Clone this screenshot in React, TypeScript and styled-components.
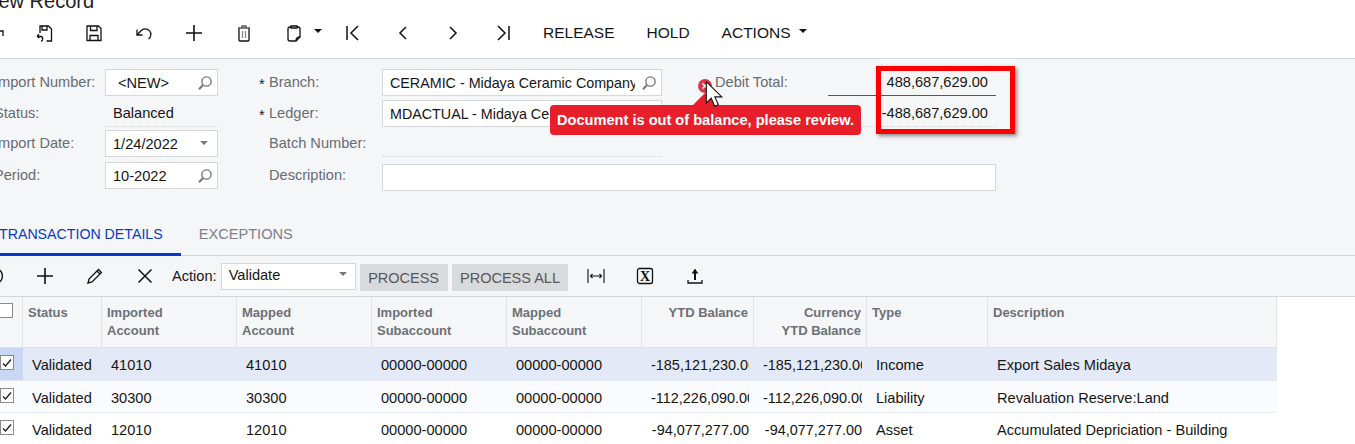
import * as React from "react";
import styled, { createGlobalStyle } from "styled-components";

const GlobalStyle = createGlobalStyle`
  html, body {
    margin: 0;
    background: #fff;
    overflow: hidden;
  }
  * {
    box-sizing: border-box;
  }
`;

const rows = [
  ["41010", "00000-00000", "-185,121,230.00", "Income", "Export Sales Midaya"],
  ["30300", "00000-00000", "-112,226,090.00", "Liability", "Revaluation Reserve:Land"],
  ["12010", "00000-00000", "-94,077,277.00", "Asset", "Accumulated Depriciation - Building"],
];

function Icon({ children, size = 20 }: { children: React.ReactNode; size?: number }) {
  return (
    <svg width={size} height={size} viewBox="0 0 20 20" fill="none" stroke="#111" strokeWidth="1.3">
      {children}
    </svg>
  );
}

function SearchIcon() {
  return (
    <svg width="16" height="16" viewBox="0 0 16 16" fill="none" stroke="#777" strokeWidth="1.4">
      <circle cx="9.5" cy="6.5" r="4.6" />
      <path d="M6 10 L2 14.2" strokeWidth="2" />
    </svg>
  );
}

function ToolbarIcons() {
  return (
    <>
      <IconButton>
        <Icon>
          <path d="M13 8h6v5" />
        </Icon>
      </IconButton>
      <IconButton>
        <Icon>
          <path d="M6 10V3h8.5l3 3v12h-5" />
          <path d="M8 3v4h5V3" />
          <path d="M3 13.5l2-2.2M3 13.5l2.4 1.4M3 13.5h4c2 0 2.3 4.5 0 4.5" />
        </Icon>
      </IconButton>
      <IconButton>
        <Icon>
          <path d="M3 3h11.5l2.5 2.5V17.500H3z" />
          <path d="M6.500 3v4.500h6.500V3" />
          <path d="M6 17.500v-5h8v5" />
        </Icon>
      </IconButton>
      <IconButton>
        <Icon>
          <path d="M3 6.500v5.500h5.500" />
          <path d="M3 12l4-4.200a5.600 5.600 0 1 1 7.500 8.200" />
        </Icon>
      </IconButton>
      <IconButton>
        <Icon>
          <path d="M10 2v16M2 10h16" strokeWidth="1.6" />
        </Icon>
      </IconButton>
      <IconButton>
        <Icon>
          <path d="M4 5h12M8 5V3h4v2" stroke="#555" />
          <path d="M5 5.500V17a1 1 0 0 0 1 1h8a1 1 0 0 0 1-1V5.500" />
          <path d="M8.500 8v7M11.500 8v7" stroke="#888" />
        </Icon>
      </IconButton>
      <ClipboardButton>
        <Icon>
          <path d="M7 4H6a2 2 0 0 0-2 2v10a2 2 0 0 0 2 2h6l4-4V6a2 2 0 0 0-2-2h-1" />
          <path d="M7 5V3h6v2z" />
          <path d="M12 18c0-3 1-4 4-4" />
        </Icon>
        <Caret />
      </ClipboardButton>
      <IconButton>
        <Icon>
          <path d="M4 3v14M15 3l-7 7 7 7" strokeWidth="1.5" />
        </Icon>
      </IconButton>
      <IconButton>
        <Icon>
          <path d="M13 4l-6 6 6 6" strokeWidth="1.5" />
        </Icon>
      </IconButton>
      <IconButton>
        <Icon>
          <path d="M7 4l6 6-6 6" strokeWidth="1.5" />
        </Icon>
      </IconButton>
      <IconButton>
        <Icon>
          <path d="M16 3v14M5 3l7 7-7 7" strokeWidth="1.5" />
        </Icon>
      </IconButton>
    </>
  );
}

export default function App() {
  return (
    <Viewport>
      <GlobalStyle />
      <Canvas>
        <Title>New Record</Title>
        <Toolbar>
          <ToolbarIcons />
          <TextActions>
            <TextButton>RELEASE</TextButton>
            <TextButton>HOLD</TextButton>
            <TextButton>
              ACTIONS
              <Caret />
            </TextButton>
          </TextActions>
        </Toolbar>

        <Form>
          <FirstColumn>
            <FieldLabel>Import Number:</FieldLabel>
            <Box>
              <NewValue>&lt;NEW&gt;</NewValue>
              <SearchIcon />
            </Box>
            <FieldLabel>Status:</FieldLabel>
            <ReadOnly>Balanced</ReadOnly>
            <FieldLabel>Import Date:</FieldLabel>
            <Box>
              <Value>1/24/2022</Value>
              <GrayCaret />
            </Box>
            <FieldLabel>Period:</FieldLabel>
            <Box>
              <Value>10-2022</Value>
              <SearchIcon />
            </Box>
          </FirstColumn>

          <SecondColumn>
            <RequiredLabel>Branch:</RequiredLabel>
            <Box>
              <LongValue>CERAMIC - Midaya Ceramic Company</LongValue>
              <SearchIcon />
            </Box>
            <RequiredLabel>Ledger:</RequiredLabel>
            <Box>
              <LongValue>MDACTUAL - Midaya Ceramic Company</LongValue>
              <SearchIcon />
            </Box>
            <PlainLabel>Batch Number:</PlainLabel>
            <ReadOnly />
            <DescriptionLabel>Description:</DescriptionLabel>
            <WideBox />
          </SecondColumn>

          <ThirdColumn>
            <TotalLabel>
              <ErrorDot>
                <svg width="14" height="14" viewBox="0 0 14 14">
                  <circle cx="7" cy="7" r="7" fill="#d8384c" />
                  <path d="M4.500 4.500l5 5M9.500 4.500l-5 5" stroke="#fff" strokeWidth="1.500" />
                </svg>
              </ErrorDot>
              Debit Total:
            </TotalLabel>
            <TotalValue $error>488,687,629.00</TotalValue>
            <span />
            <TotalValue>-488,687,629.00</TotalValue>
          </ThirdColumn>
        </Form>

        <Tabs>
          <Tab $active>TRANSACTION DETAILS</Tab>
          <Tab>EXCEPTIONS</Tab>
        </Tabs>

        <GridBar>
          <IconButton>
            <Icon>
              <path d="M14 3.500c4.500 3 4.500 10 0 13" />
            </Icon>
          </IconButton>
          <IconButton>
            <Icon>
              <path d="M10 2v16M2 10h16" strokeWidth="1.6" />
            </Icon>
          </IconButton>
          <IconButton>
            <Icon>
              <path d="M3 17l1-4L13.500 3.500l3 3L7 16z" />
              <path d="M12 5l3 3" />
            </Icon>
          </IconButton>
          <IconButton>
            <Icon>
              <path d="M3.500 3.500l13 13M16.500 3.500l-13 13" strokeWidth="1.500" />
            </Icon>
          </IconButton>
          <ActionLabel>Action:</ActionLabel>
          <ActionSelect>
            Validate
            <GrayCaret />
          </ActionSelect>
          <GrayButton>PROCESS</GrayButton>
          <GrayButton>PROCESS ALL</GrayButton>
          <FitButton>
            <Icon>
              <path d="M2 3v14M18 3v14" stroke="#333" />
              <path d="M4.500 10h11M6.500 8l-2 2 2 2M13.500 8l2 2-2 2" strokeWidth="1.100" />
            </Icon>
          </FitButton>
          <IconButton>
            <Icon>
              <rect x="2.500" y="2.500" width="15" height="15" rx="2" />
              <text x="10" y="15" textAnchor="middle" fontFamily="'Liberation Serif', serif" fontWeight="700" fontSize="14" fill="#111" stroke="none">
                X
              </text>
            </Icon>
          </IconButton>
          <IconButton>
            <Icon>
              <path d="M10 14V3.500" strokeWidth="2" />
              <path d="M6.500 7.500L10 3l3.500 4.500z" fill="#111" stroke="none" />
              <path d="M3 14v3h14v-3" />
            </Icon>
          </IconButton>
        </GridBar>

        <Table>
          <HeaderRow>
            <HeaderCheckCell>
              <CheckBox />
            </HeaderCheckCell>
            <HeaderCell>Status</HeaderCell>
            <HeaderCell>Imported<br />Account</HeaderCell>
            <HeaderCell>Mapped<br />Account</HeaderCell>
            <HeaderCell>Imported<br />Subaccount</HeaderCell>
            <HeaderCell>Mapped<br />Subaccount</HeaderCell>
            <HeaderCell $right>YTD Balance</HeaderCell>
            <HeaderCell $right>Currency<br />YTD Balance</HeaderCell>
            <HeaderCell>Type</HeaderCell>
            <HeaderCell>Description</HeaderCell>
          </HeaderRow>
          {rows.map(([account, sub, balance, type, description], index) => (
            <BodyRow key={account} $index={index}>
              <CheckCell $active={index === 0}>
                <CheckBox>
                  <svg width="10" height="10" viewBox="0 0 10 10" fill="none" stroke="#222" strokeWidth="1.400">
                    <path d="M1 5.500l2.500 2.500L9 1.500" />
                  </svg>
                </CheckBox>
              </CheckCell>
              <Cell>Validated</Cell>
              <Cell>{account}</Cell>
              <Cell>{account}</Cell>
              <Cell>{sub}</Cell>
              <Cell>{sub}</Cell>
              <AmountCell><Clip>{balance}</Clip></AmountCell>
              <AmountCell><Clip>{balance}</Clip></AmountCell>
              <Cell>{type}</Cell>
              <Cell>{description}</Cell>
            </BodyRow>
          ))}
        </Table>
      </Canvas>

      <Tooltip>Document is out of balance, please review.</Tooltip>
      <Highlight />
      <Cursor width="19" height="26" viewBox="0 0 13 19">
        <path d="M.5.500V16l3.600-3.400 2.500 5.900 2.700-1.100-2.500-5.800h5z" fill="#fff" stroke="#111" strokeWidth=".8" />
      </Cursor>
    </Viewport>
  );
}

const Viewport = styled.div`
  position: relative;
  width: 1355px;
  height: 444px;
  overflow: hidden;
  font-family: "Liberation Sans", Arial, sans-serif;
  font-size: 14.6px;
  color: #151515;
`;

/* the screenshot is scrolled: the page starts left of and above the window */
const Canvas = styled.div`
  width: 1395px;
  margin: -10px 0 0 -40px;
`;

const Title = styled.div`
  height: 24px;
  font-size: 20px;
  line-height: 23px;
  padding-left: 24px;
  white-space: nowrap;
  color: #222;
`;

const Toolbar = styled.div`
  display: flex;
  align-items: center;
  height: 45px;
  padding: 0 0 7px 9px;
  border-bottom: 1px solid #d6d7d9;
`;

const IconButton = styled.div`
  flex: none;
  display: flex;
  align-items: center;
  justify-content: center;
  width: 50px;
  height: 32px;
`;

const ClipboardButton = styled.div`
  flex: none;
  display: flex;
  align-items: center;
  gap: 10px;
  width: 59px;
  height: 32px;
  padding-left: 15px;
`;

const Caret = styled.span`
  display: inline-block;
  width: 0;
  height: 0;
  border-left: 4px solid transparent;
  border-right: 4px solid transparent;
  border-top: 4px solid #111;
  margin-bottom: 3px;
`;

const GrayCaret = styled(Caret)`
  border-top-color: #777;
  margin: 0 5px 2px auto;
`;

const TextActions = styled.div`
  display: flex;
  margin-left: -1px;
`;

const TextButton = styled.div`
  display: flex;
  align-items: center;
  gap: 8px;
  padding: 0 16px;
  font-size: 15.5px;
`;

const Form = styled.div`
  display: flex;
  height: 166px;
  padding: 10px 0 0 34px;
  background: #f5f6f8;
`;

const FirstColumn = styled.div`
  display: grid;
  grid-template-columns: 111px 113px;
  grid-template-rows: 31px 30px 32px 27px;
  margin-right: 39px;
`;

const SecondColumn = styled.div`
  display: grid;
  grid-template-columns: 125px 280px;
  grid-template-rows: 31px 30px 34px 27px;
`;

const ThirdColumn = styled.div`
  display: grid;
  grid-template-columns: 130px 168px;
  grid-template-rows: 31px 31px;
  margin-left: 36px;
`;

const FieldLabel = styled.div`
  height: 27px;
  line-height: 26px;
  color: #686c73;
  white-space: nowrap;
`;

const PlainLabel = styled(FieldLabel)`
  padding-left: 12px;
`;

const DescriptionLabel = styled(PlainLabel)`
  margin-top: -2px;
`;

const RequiredLabel = styled(PlainLabel)`
  position: relative;

  &::before {
    content: "*";
    position: absolute;
    left: 2px;
    top: 2px;
    color: #222;
  }
`;

const TotalLabel = styled(FieldLabel)`
  display: flex;
  align-items: flex-start;
  gap: 3px;
`;

const ErrorDot = styled.span`
  display: block;
  height: 14px;
  margin-top: 6px;
`;

const Box = styled.div`
  display: flex;
  align-items: center;
  height: 27px;
  padding: 0 4px 0 7px;
  background: #fff;
  border: 1px solid #d5d7db;
`;

const WideBox = styled(Box)`
  width: 614px;
`;

const Value = styled.div`
  flex: 1;
  min-width: 0;
  overflow: hidden;
  white-space: nowrap;
  margin-right: 3px;
  line-height: 20px;
`;

const LongValue = styled(Value)`
  margin-right: 6px;
  font-size: 14.3px;
`;

const NewValue = styled(Value)`
  padding-left: 5px;
`;

const ReadOnly = styled.div`
  height: 27px;
  padding-left: 8px;
  line-height: 26px;
  border-bottom: 1px dotted #d5d7db;
`;

const TotalValue = styled.div<{ $error?: boolean }>`
  height: 27px;
  padding-right: 8px;
  text-align: right;
  line-height: 26px;
  border-bottom: 1px ${(p) => (p.$error ? "solid #e21c1c" : "dotted #d5d7db")};
`;

const Tabs = styled.div`
  display: flex;
  height: 31px;
  padding-left: 21px;
  background: #f5f6f8;
  border-bottom: 1px solid #d3d5d9;
`;

const Tab = styled.div<{ $active?: boolean }>`
  height: 31px;
  padding: 0 18px;
  font-size: ${(p) => (p.$active ? "14.2px" : "14.6px")};
  line-height: 18px;
  white-space: nowrap;
  color: ${(p) => (p.$active ? "#0b3ac4" : "#7d8087")};
  border-bottom: 3px solid ${(p) => (p.$active ? "#0a36c9" : "transparent")};
`;

const GridBar = styled.div`
  display: flex;
  align-items: center;
  height: 41px;
  padding-left: 10px;
  background: #f5f6f8;
  border-bottom: 1px solid #d3d5d9;
`;

const ActionLabel = styled.div`
  margin: 0 4px 0 2px;
`;

const ActionSelect = styled.div`
  display: flex;
  align-items: center;
  width: 135px;
  height: 27px;
  padding: 0 3px 2px 7px;
  margin-right: 4px;
  background: #fff;
  border: 1px solid #d5d7db;
`;

const GrayButton = styled.div`
  height: 27px;
  margin: 2px 4px 0 0;
  padding: 0 8.5px;
  line-height: 28px;
  font-size: 14.5px;
  color: #55585d;
  background: #d9dadc;
  white-space: nowrap;
`;

const FitButton = styled(IconButton)`
  width: 48px;
`;

const Table = styled.div`
  width: 1317px;
`;

const columns = "63px 79px 135px 135px 135px 135px 112px 113px 121px 289px";

const HeaderRow = styled.div`
  display: grid;
  grid-template-columns: ${columns};
  height: 51px;
  background: #f5f6f8;
  border-bottom: 1px solid #dfe1e5;
`;

const HeaderCell = styled.div<{ $right?: boolean }>`
  padding: 7px 5px 0 5px;
  text-align: ${(p) => (p.$right ? "right" : "left")};
  font-size: 13px;
  font-weight: 700;
  line-height: 18px;
  color: #6d7076;
  border-right: 1px solid #e2e4e8;
`;

const HeaderCheckCell = styled(HeaderCell)`
  display: flex;
  justify-content: flex-end;
  padding: 6px 9px 0 0;
`;

const BodyRow = styled.div<{ $index: number }>`
  display: grid;
  grid-template-columns: ${columns};
  height: ${(p) => (p.$index === 1 ? "32px" : "33px")};
  background: ${(p) => ["#e3e9f7", "#fafbff", "#fff"][p.$index]};
  border-bottom: 1px solid ${(p) => (p.$index === 0 ? "#e3e9f7" : "#e9edf7")};
`;

const Cell = styled.div`
  display: flex;
  align-items: center;
  min-width: 0;
  padding: 2px 0 0 9px;
  white-space: nowrap;
`;

const AmountCell = styled(Cell)`
  justify-content: flex-end;
  padding-right: 5px;
  font-size: 14.45px;
`;

const Clip = styled.div`
  width: 100%;
  overflow: hidden;
  text-align: right;
`;

const CheckCell = styled.div<{ $active: boolean }>`
  display: flex;
  justify-content: flex-end;
  padding: 7px 9px 0 0;
  background: ${(p) => (p.$active ? "#c9d7f4" : "transparent")};
`;

const CheckBox = styled.div`
  display: flex;
  align-items: center;
  justify-content: center;
  width: 14px;
  height: 15px;
  background: #fff;
  border: 1px solid #8a8a8a;
`;

const Tooltip = styled.div`
  position: absolute;
  left: 550px;
  top: 105px;
  width: 311px;
  height: 30px;
  padding-left: 7px;
  font-weight: 700;
  line-height: 30px;
  white-space: nowrap;
  color: #fff;
  background: #e81e2b;
  border-radius: 4px;

  &::before {
    content: "";
    position: absolute;
    left: 143px;
    top: -12px;
    border-left: 12px solid transparent;
    border-right: 12px solid transparent;
    border-bottom: 12px solid #e81e2b;
  }
`;

const Highlight = styled.div`
  position: absolute;
  left: 876px;
  top: 66px;
  width: 139px;
  height: 68px;
  border: 5px solid #f00;
  box-shadow: 2px 2px 4px rgba(0, 0, 0, 0.45);
`;

const Cursor = styled.svg`
  position: absolute;
  left: 705px;
  top: 81px;
`;
